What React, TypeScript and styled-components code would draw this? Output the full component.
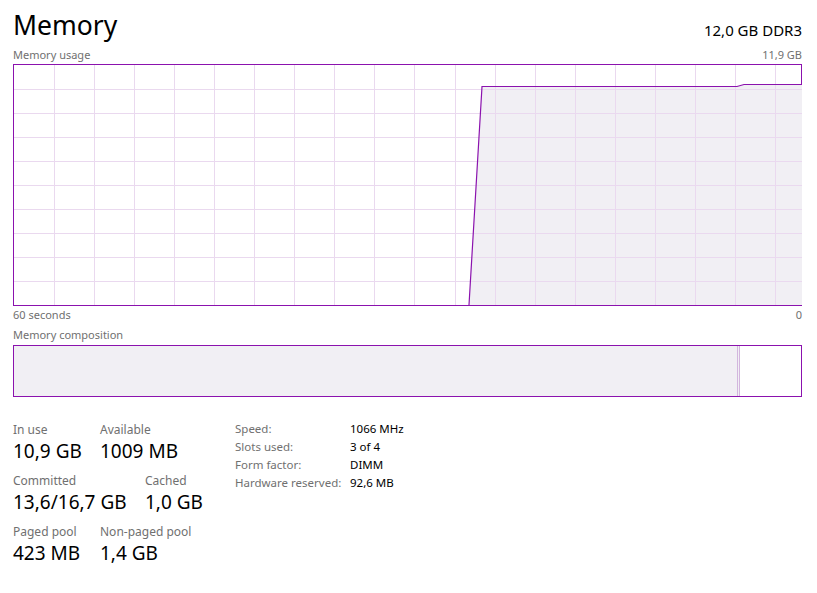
import React from "react";
import styled, { createGlobalStyle } from "styled-components";

const Global = createGlobalStyle`
  html, body { margin: 0; padding: 0; background: #fff; }
  body { font-family: "Noto Sans", "Open Sans", sans-serif; color: #000; }
`;

const ACCENT = "#8b12ae";
const GRID = "#ead9ef";
const FILL = "#f1eff4";
const LABEL = "#707070";

const Page = styled.div`
  width: 817px;
  height: 593px;
  box-sizing: border-box;
  padding: 0 15px 0 13px;
  display: flex;
  flex-direction: column;
`;

const Header = styled.div`
  display: flex;
  justify-content: space-between;
  align-items: flex-end;
  height: 46px;
`;

const Title = styled.div`
  font-size: 26.5px;
  line-height: 40px;
  font-weight: 400;
  margin-bottom: 1px;
`;

const Spec = styled.div`
  font-size: 15px;
  line-height: 22px;
  margin-bottom: 5px;
`;

const CaptionRow = styled.div<{ $h?: number }>`
  display: flex;
  justify-content: space-between;
  font-size: 11px;
  color: ${LABEL};
  height: ${(p) => p.$h ?? 20}px;
  line-height: ${(p) => p.$h ?? 20}px;
`;

const GraphBox = styled.div`
  box-sizing: border-box;
  height: 242px;
  border: 1px solid ${ACCENT};
  background: #fff;
  svg { display: block; }
`;

const CompBar = styled.div`
  box-sizing: border-box;
  height: 52px;
  border: 1px solid ${ACCENT};
  display: flex;
`;

const Segment = styled.div<{ $bg: string; $divider?: boolean }>`
  background: ${(p) => p.$bg};
  border-right: ${(p) => (p.$divider ? "1px solid #d3b6de" : "none")};
`;

const FreeSeg = styled.div`
  flex: 1;
  background: #fff;
`;

const Stats = styled.div`
  display: flex;
  margin-top: 25px;
`;

const LeftStats = styled.div`
  width: 222px;
  display: flex;
  flex-direction: column;
  gap: 8px;
`;

const StatRow = styled.div`
  display: flex;
`;

const Stat = styled.div<{ $w: number }>`
  width: ${(p) => p.$w}px;
  display: flex;
  flex-direction: column;
`;

const StatLabel = styled.div`
  font-size: 12px;
  line-height: 16px;
  color: ${LABEL};
`;

const StatValue = styled.div`
  font-size: 19px;
  line-height: 27px;
`;

const Details = styled.div`
  display: grid;
  grid-template-columns: 115px auto;
  grid-auto-rows: 18px;
  line-height: 18px;
  font-size: 11.5px;
  align-content: start;
  margin-top: -2px;
`;

const DKey = styled.div`
  color: ${LABEL};
`;

const DVal = styled.div`
  color: #000;
`;

const W = 788;
const H = 240;

function UsageChart() {
  const vlines: number[] = [];
  for (let x = 39.5; x < W; x += 40.1) vlines.push(Math.round(x) + 0.5);
  const hlines: number[] = [];
  for (let y = 24; y < H; y += 24) hlines.push(y + 0.5);
  const pts: [number, number][] = [
    [455, 240],
    [468, 21.5],
    [723, 21.5],
    [730, 19.5],
    [788, 19.5],
  ];
  const line = pts.map((p) => p.join(",")).join(" ");
  const area = `${line} 788,240 455,240`;
  return (
    <svg width={W} height={H} viewBox={`0 0 ${W} ${H}`}>
      <polygon points={area} fill={FILL} />
      {vlines.map((x) => (
        <line key={"v" + x} x1={x} x2={x} y1={0} y2={H} stroke={GRID} strokeWidth={1} />
      ))}
      {hlines.map((y) => (
        <line key={"h" + y} x1={0} x2={W} y1={y} y2={y} stroke={GRID} strokeWidth={1} />
      ))}
      <polyline points={line} fill="none" stroke={ACCENT} strokeWidth={1.2} />
    </svg>
  );
}

export default function App() {
  return (
    <>
      <Global />
      <Page>
        <Header>
          <Title>Memory</Title>
          <Spec>12,0 GB DDR3</Spec>
        </Header>
        <CaptionRow $h={18}>
          <span>Memory usage</span>
          <span>11,9 GB</span>
        </CaptionRow>
        <GraphBox>
          <UsageChart />
        </GraphBox>
        <CaptionRow $h={18}>
          <span>60 seconds</span>
          <span>0</span>
        </CaptionRow>
        <CaptionRow $h={21}>
          <span>Memory composition</span>
        </CaptionRow>
        <CompBar>
          <Segment $bg={FILL} $divider style={{ width: 723 }} />
          <Segment $bg={FILL} $divider style={{ width: 1 }} />
          <FreeSeg />
        </CompBar>
        <Stats>
          <LeftStats>
            <StatRow>
              <Stat $w={87}>
                <StatLabel>In use</StatLabel>
                <StatValue>10,9 GB</StatValue>
              </Stat>
              <Stat $w={120}>
                <StatLabel>Available</StatLabel>
                <StatValue>1009 MB</StatValue>
              </Stat>
            </StatRow>
            <StatRow>
              <Stat $w={132}>
                <StatLabel>Committed</StatLabel>
                <StatValue>13,6/16,7 GB</StatValue>
              </Stat>
              <Stat $w={80}>
                <StatLabel>Cached</StatLabel>
                <StatValue>1,0 GB</StatValue>
              </Stat>
            </StatRow>
            <StatRow>
              <Stat $w={87}>
                <StatLabel>Paged pool</StatLabel>
                <StatValue>423 MB</StatValue>
              </Stat>
              <Stat $w={120}>
                <StatLabel>Non-paged pool</StatLabel>
                <StatValue>1,4 GB</StatValue>
              </Stat>
            </StatRow>
          </LeftStats>
          <Details>
            <DKey>Speed:</DKey>
            <DVal>1066 MHz</DVal>
            <DKey>Slots used:</DKey>
            <DVal>3 of 4</DVal>
            <DKey>Form factor:</DKey>
            <DVal>DIMM</DVal>
            <DKey>Hardware reserved:</DKey>
            <DVal>92,6 MB</DVal>
          </Details>
        </Stats>
      </Page>
    </>
  );
}
